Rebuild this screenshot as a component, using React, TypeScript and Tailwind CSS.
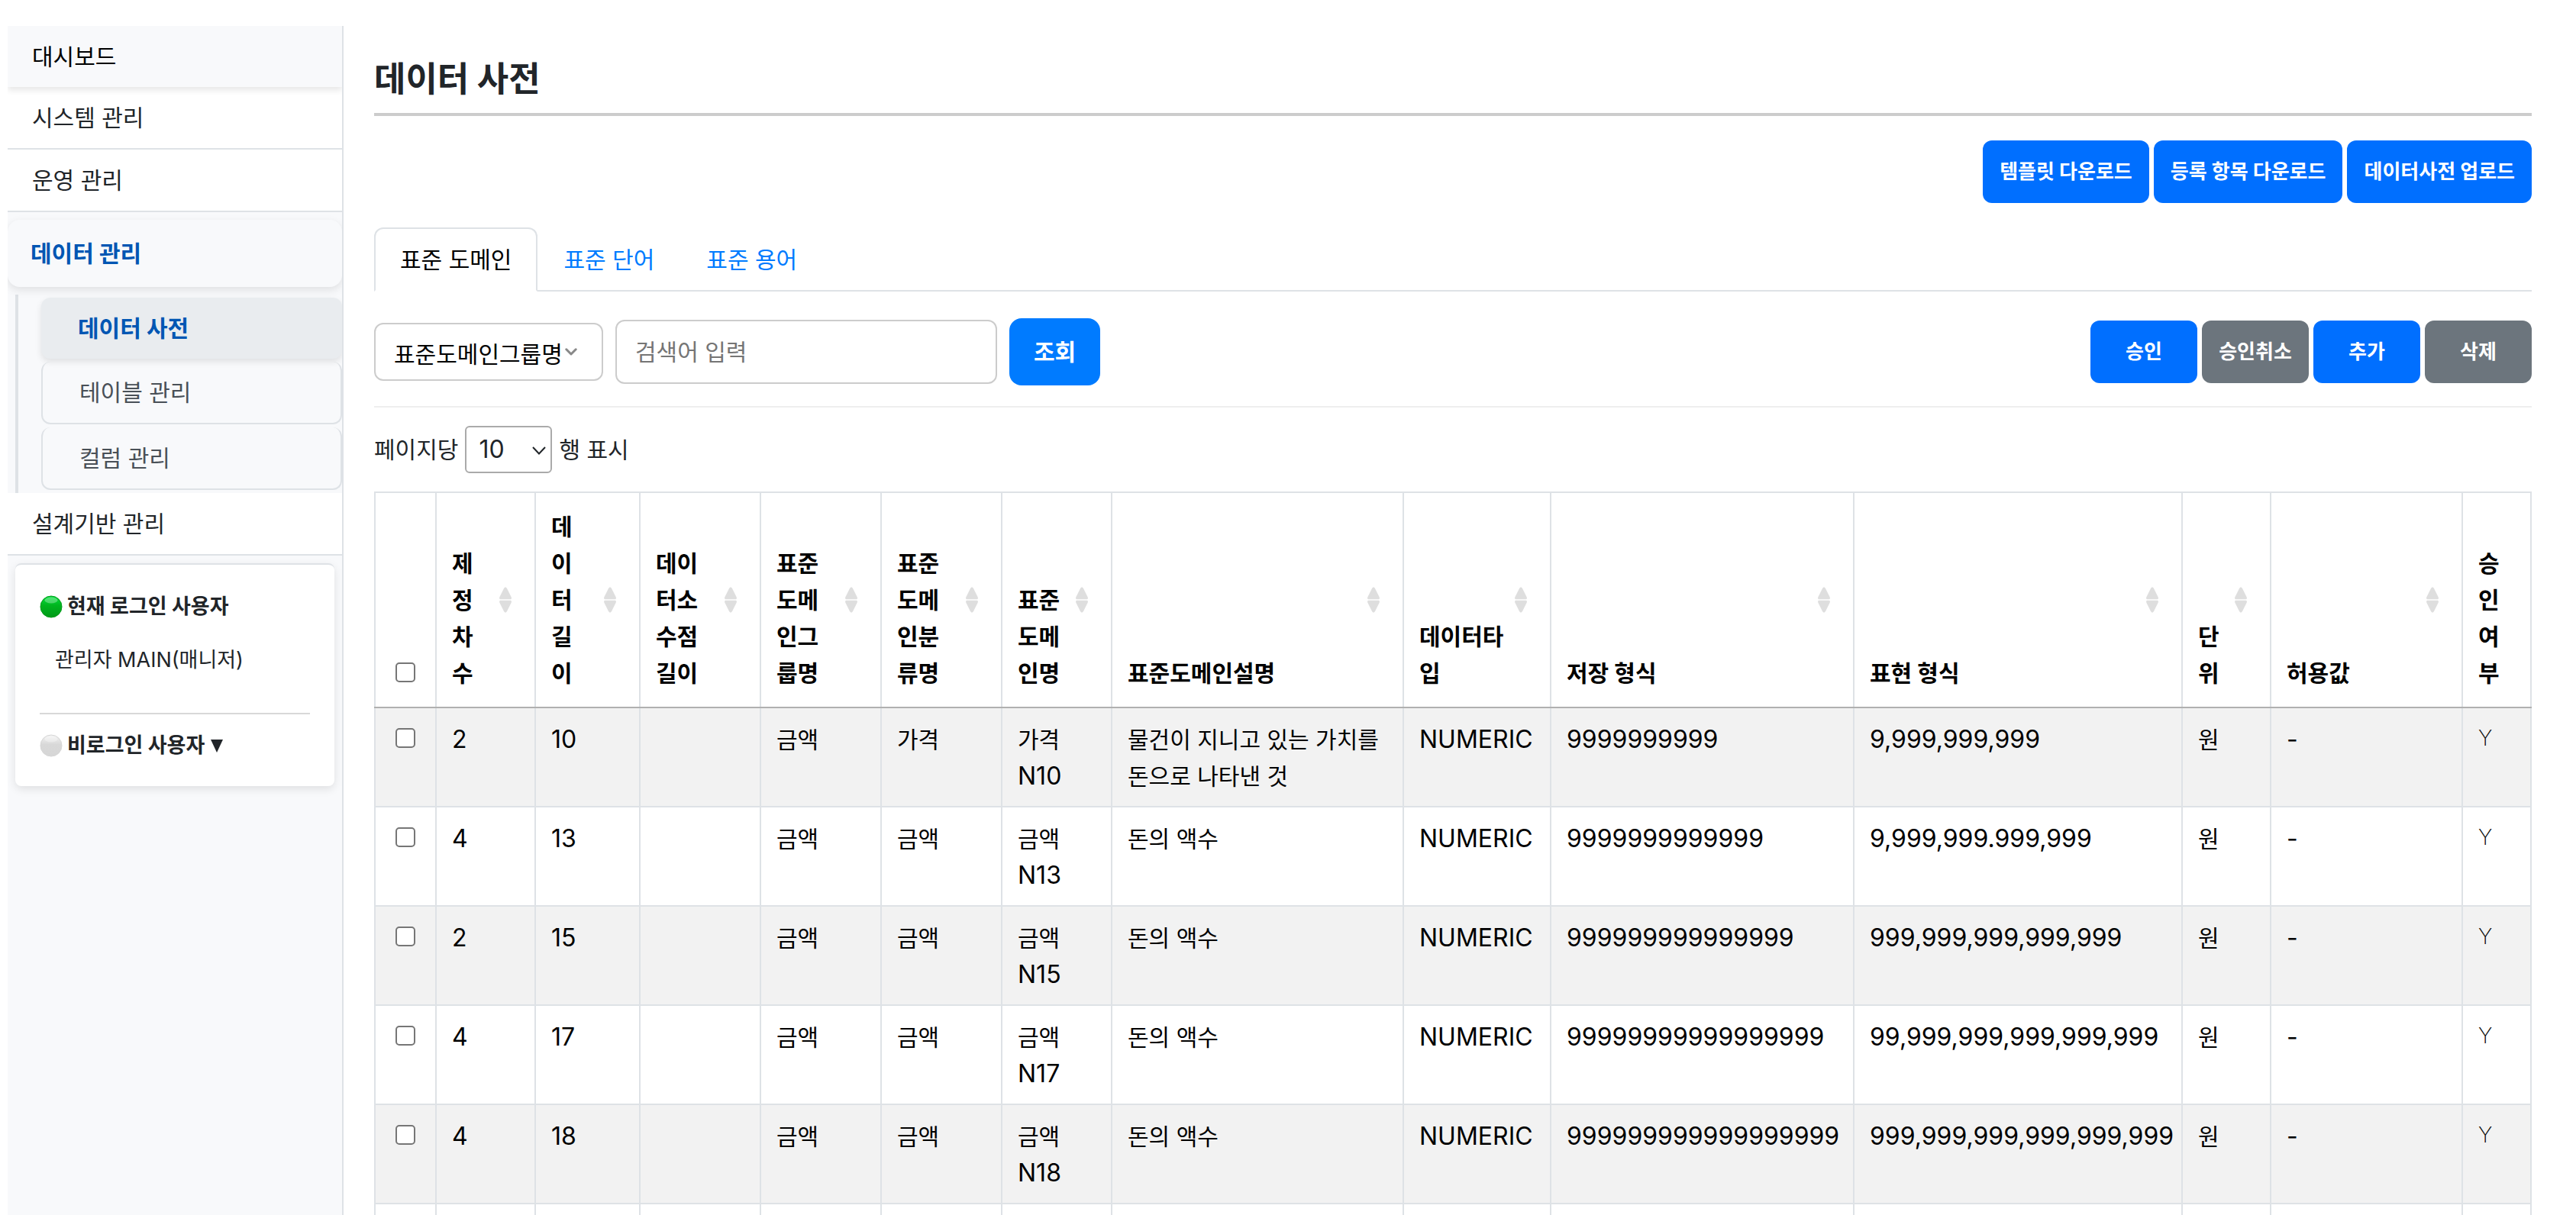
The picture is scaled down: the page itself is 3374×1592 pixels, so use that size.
import React from "react";

type Row = {
  revision: string;
  length: string;
  decimals: string;
  group: string;
  category: string;
  name: string;
  code: string;
  description: string;
  dataType: string;
  storage: string;
  display: string;
  unit: string;
  allowed: string;
  approved: string;
};

const rows: Row[] = [
  { revision: "2", length: "10", decimals: "", group: "금액", category: "가격", name: "가격", code: "N10", description: "물건이 지니고 있는 가치를 돈으로 나타낸 것", dataType: "NUMERIC", storage: "9999999999", display: "9,999,999,999", unit: "원", allowed: "-", approved: "Y" },
  { revision: "4", length: "13", decimals: "", group: "금액", category: "금액", name: "금액", code: "N13", description: "돈의 액수", dataType: "NUMERIC", storage: "9999999999999", display: "9,999,999.999,999", unit: "원", allowed: "-", approved: "Y" },
  { revision: "2", length: "15", decimals: "", group: "금액", category: "금액", name: "금액", code: "N15", description: "돈의 액수", dataType: "NUMERIC", storage: "999999999999999", display: "999,999,999,999,999", unit: "원", allowed: "-", approved: "Y" },
  { revision: "4", length: "17", decimals: "", group: "금액", category: "금액", name: "금액", code: "N17", description: "돈의 액수", dataType: "NUMERIC", storage: "99999999999999999", display: "99,999,999,999,999,999", unit: "원", allowed: "-", approved: "Y" },
  { revision: "4", length: "18", decimals: "", group: "금액", category: "금액", name: "금액", code: "N18", description: "돈의 액수", dataType: "NUMERIC", storage: "999999999999999999", display: "999,999,999,999,999,999", unit: "원", allowed: "-", approved: "Y" },
  { revision: "", length: "", decimals: "", group: "", category: "", name: "", code: "", description: "", dataType: "", storage: "", display: "", unit: "", allowed: "", approved: "" },
];

const columns: { label: string; width: string; sortable: boolean }[] = [
  { label: "제\n정\n차\n수", width: "w-[130px]", sortable: true },
  { label: "데\n이\n터\n길\n이", width: "w-[137px]", sortable: true },
  { label: "데이\n터소\n수점\n길이", width: "w-[158px]", sortable: true },
  { label: "표준\n도메\n인그\n룹명", width: "w-[158px]", sortable: true },
  { label: "표준\n도메\n인분\n류명", width: "w-[158px]", sortable: true },
  { label: "표준\n도메\n인명", width: "w-[144px]", sortable: true },
  { label: "표준도메인설명", width: "", sortable: true },
  { label: "데이터타\n입", width: "w-[193px]", sortable: true },
  { label: "저장 형식", width: "w-[397px]", sortable: true },
  { label: "표현 형식", width: "w-[430px]", sortable: true },
  { label: "단\n위", width: "w-[116px]", sortable: true },
  { label: "허용값", width: "w-[251px]", sortable: true },
  { label: "승\n인\n여\n부", width: "w-[90px]", sortable: false },
];

function SortIcon() {
  return (
    <svg viewBox="0 0 16 34" className="absolute top-1/2 right-[30px] h-[34px] w-4 -translate-y-1/2" fill="#dedede" aria-hidden="true">
      <path d="M8 .5C8.9 .5 9.5 1.1 10 2L15.6 13.3C16.3 15 15.8 16.2 14.4 16.2H1.6C.2 16.2-.3 15 .4 13.3L6 2C6.5 1.1 7.1 .5 8 .5Z" />
      <path d="M8 33.5C8.9 33.5 9.5 32.9 10 32L15.6 20.7C16.3 19 15.8 17.8 14.4 17.8H1.6C.2 17.8-.3 19 .4 20.7L6 32C6.5 32.9 7.1 33.5 8 33.5Z" />
    </svg>
  );
}

function StatusDot({ id, from, to, rim }: { id: string; from: string; to: string; rim: string }) {
  return (
    <svg viewBox="0 0 30 30" className="size-[30px]" aria-hidden="true">
      <defs>
        <linearGradient id={id} x1="0" y1="0" x2="0" y2="1">
          <stop offset="0" stopColor={from} />
          <stop offset="0.45" stopColor={to} />
          <stop offset="1" stopColor={rim} />
        </linearGradient>
      </defs>
      <circle cx="15" cy="15" r="14" fill={`url(#${id})`} stroke={rim} strokeWidth="1" />
      <ellipse cx="15" cy="6.5" rx="8.5" ry="4" fill="#fff" opacity="0.3" />
    </svg>
  );
}

function Check({ label }: { label: string }) {
  return (
    <input
      type="checkbox"
      aria-label={label}
      className="block size-[26px] appearance-none rounded-[5px] border-2 border-[#767676] bg-white checked:bg-[#007bff]"
    />
  );
}

function ActionButton({ children, muted = false }: { children: React.ReactNode; muted?: boolean }) {
  return (
    <button
      type="button"
      className={
        "flex h-[82px] min-w-[140px] items-center justify-center rounded-xl px-[22px] text-[26px] leading-[40px] font-bold whitespace-nowrap text-white " +
        (muted ? "bg-[#6c757d]" : "bg-[#006fff]")
      }
    >
      {children}
    </button>
  );
}

function Sidebar() {
  return (
    <aside className="flex w-[440px] shrink-0 flex-col border-r-2 border-[#dee2e6] bg-[#f8f9fb] text-[#212529]">
      <nav>
        <a href="#dashboard" className="relative block bg-[#f8f9fb] px-8 py-4 text-black shadow-[0_4px_8px_rgba(0,0,0,0.1)] [clip-path:inset(0_0_-16px_0)]">
          대시보드
        </a>
        <a href="#system" className="block border-b-2 border-[#dee2e6] bg-white px-8 py-4">시스템 관리</a>
        <a href="#operation" className="block border-b-2 border-[#dee2e6] bg-white px-8 py-4">운영 관리</a>
        <a href="#data" className="mt-[10px] block rounded-2xl px-[30px] py-5 font-bold text-[#0056b3] shadow-[0_4px_12px_rgba(0,0,0,0.1)] [clip-path:inset(-10px_0_-20px_0)]">
          데이터 관리
        </a>
        <div className="mt-[10px] ml-[10px] flex flex-col gap-1 border-l-4 border-[#dee2e6] py-1 pl-[30px] text-[#495057]">
          <a href="#dictionary" className="block rounded-xl bg-[#e9ecef] px-12 py-4 font-bold text-[#0056b3] shadow-[0_4px_8px_rgba(0,0,0,0.1)] [clip-path:inset(-8px_0_-16px_-8px)]">
            데이터 사전
          </a>
          <a href="#tables" className="block rounded-xl border-x-2 border-b-2 border-[#dee2e6] px-12 py-4">테이블 관리</a>
          <a href="#columns" className="block rounded-xl border-x-2 border-b-2 border-[#dee2e6] px-12 py-4">컬럼 관리</a>
        </div>
        <a href="#design" className="block border-b-2 border-[#dee2e6] bg-white px-8 py-4">설계기반 관리</a>
      </nav>
      <section className="mx-[10px] mt-[10px] rounded-lg border-t-2 border-[#dee2e6] bg-white px-8 pt-[34px] pb-8 text-[27px] leading-[42px] shadow-[0_4px_12px_rgba(0,0,0,0.1)]">
        <h2 className="flex items-center gap-1.5 font-bold">
          <StatusDot id="dot-online" from="#00e03c" to="#00b41e" rim="#009a18" />
          현재 로그인 사용자
        </h2>
        <p className="mt-7 ml-5">관리자 MAIN(매니저)</p>
        <hr className="mt-12 border-t-2 border-[#d8d8d8]" />
        <button type="button" className="mt-5 flex items-center gap-1.5 font-bold">
          <StatusDot id="dot-offline" from="#f4f4f4" to="#d8d8d8" rim="#d6d6d6" />
          <span className="flex items-center gap-2">
            비로그인 사용자
            <svg viewBox="0 0 16 17" className="h-[17px] w-4" fill="#212529" aria-hidden="true">
              <path d="M0 0H16L8 17Z" />
            </svg>
          </span>
        </button>
      </section>
    </aside>
  );
}

function DomainTable() {
  return (
    <table className="mt-6 w-full table-fixed border-collapse text-left text-black">
      <colgroup>
        <col className="w-[80px]" />
        {columns.map((c) => (
          <col key={c.label} className={c.width} />
        ))}
      </colgroup>
      <thead>
        <tr className="align-bottom">
          <th className="border-2 border-[#dee2e6] border-b-[#b0b0b0] px-[26px] pt-5 pb-8">
            <Check label="전체 선택" />
          </th>
          {columns.map((c) => (
            <th key={c.label} scope="col" className="relative border-2 border-[#dee2e6] border-b-[#b0b0b0] px-5 py-5 font-bold whitespace-pre">
              {c.label}
              {c.sortable && <SortIcon />}
            </th>
          ))}
        </tr>
      </thead>
      <tbody className="[&_td]:border-2 [&_td]:border-[#dee2e6] [&_td]:px-5 [&_td]:pt-[17px] [&_td]:pb-[15px]">
        {rows.map((r, i) => (
          <tr key={i} className="align-top odd:bg-[#f2f2f2] even:bg-white">
            <td>
              <div className="ml-1.5 flex h-11 items-center">
                <Check label={`${i + 1}행 선택`} />
              </div>
            </td>
            <td className="text-[32px]">{r.revision}</td>
            <td className="text-[32px]">{r.length}</td>
            <td className="text-[32px]">{r.decimals}</td>
            <td>{r.group}</td>
            <td>{r.category}</td>
            <td>
              {r.name}
              <br />
              <span className="text-[32px]">{r.code}</span>
            </td>
            <td>{r.description}</td>
            <td className="text-[32px]">{r.dataType}</td>
            <td className="text-[32px]">{r.storage}</td>
            <td className="text-[32px]">{r.display}</td>
            <td>{r.unit}</td>
            <td className="text-[32px]">{r.allowed}</td>
            <td className="text-[28px] leading-[44px] font-extralight">{r.approved}</td>
          </tr>
        ))}
      </tbody>
    </table>
  );
}

export default function App() {
  return (
    <div className="flex h-screen overflow-hidden bg-white pt-[34px] pl-[10px] font-['Inter','Noto_Sans_CJK_KR',sans-serif] text-[30px] leading-[48px] text-[#212529]">
      <Sidebar />
      <main className="min-w-0 flex-1 pt-10 pr-[58px] pl-10">
        <h1 className="border-b-4 border-[#ccc] pb-3.5 text-[45px] leading-[60px] font-bold">데이터 사전</h1>

        <div className="mt-8 flex justify-end gap-1.5">
          <ActionButton>템플릿 다운로드</ActionButton>
          <ActionButton>등록 항목 다운로드</ActionButton>
          <ActionButton>데이터사전 업로드</ActionButton>
        </div>

        <div role="tablist" className="mt-8 flex border-b-2 border-[#dee2e6]">
          <button type="button" role="tab" aria-selected="true" className="-mb-0.5 rounded-t-xl border-2 border-[#dee2e6] border-b-white bg-white px-8 py-4 text-black">
            표준 도메인
          </button>
          <button type="button" role="tab" aria-selected="false" className="-mb-0.5 border-2 border-transparent px-8 py-4 text-[#007bff]">표준 단어</button>
          <button type="button" role="tab" aria-selected="false" className="-mb-0.5 border-2 border-transparent px-8 py-4 text-[#007bff]">표준 용어</button>
        </div>

        <div className="mt-[35px] flex items-center justify-between border-b-2 border-[#eee] pb-[27px]">
          <form className="flex items-center gap-4" onSubmit={(e) => e.preventDefault()}>
            <div className="relative">
              <select aria-label="검색 항목" className="block h-[76px] w-[300px] appearance-none rounded-xl border-2 border-[#ccc] bg-white pt-1.5 pl-6 text-black">
                <option>표준도메인그룹명</option>
              </select>
              <svg viewBox="0 0 16 10" className="pointer-events-none absolute top-[33px] right-[34px] h-[10px] w-4" fill="none" stroke="#888" strokeWidth="3" strokeLinecap="round" strokeLinejoin="round" aria-hidden="true">
                <path d="M1.8 1.8L8 8L14.2 1.8" />
              </svg>
            </div>
            <input
              type="text"
              aria-label="검색어"
              placeholder="검색어 입력"
              className="h-[84px] w-[500px] rounded-xl border-2 border-[#ccc] px-6 placeholder:text-[#757575]"
            />
            <button type="submit" className="h-[88px] rounded-2xl bg-[#007bff] px-8 font-bold text-white">조회</button>
          </form>
          <div className="flex gap-1.5">
            <ActionButton>승인</ActionButton>
            <ActionButton muted>승인취소</ActionButton>
            <ActionButton>추가</ActionButton>
            <ActionButton muted>삭제</ActionButton>
          </div>
        </div>

        <label className="mt-6 flex items-center gap-[9px]">
          페이지당
          <span className="relative">
            <select className="block h-[62px] w-[114px] appearance-none rounded-md border-2 border-[#aaa] bg-white pl-4 text-[32px]">
              <option>10</option>
            </select>
            <svg viewBox="0 0 18 11" className="pointer-events-none absolute top-[27px] right-2 h-[11px] w-[18px]" fill="none" stroke="#212529" strokeWidth="2" aria-hidden="true">
              <path d="M1 1L9 9.5L17 1" />
            </svg>
          </span>
          행 표시
        </label>

        <DomainTable />
      </main>
    </div>
  );
}
